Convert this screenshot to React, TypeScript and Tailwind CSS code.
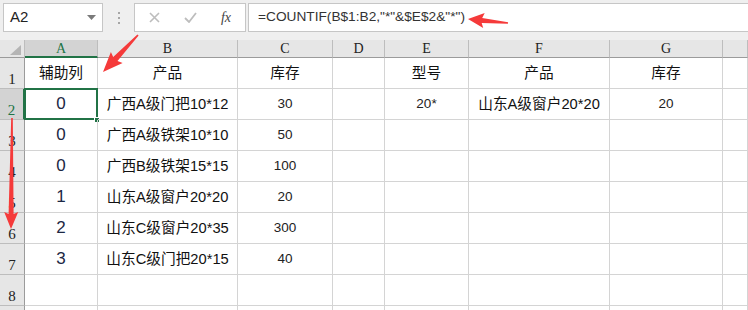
import React from 'react';

type Row = { n: number; label: string; cells: string[] };

const rows: Row[] = [
  { n: 1, label: '1', cells: ['辅助列', '产品', '库存', '', '型号', '产品', '库存', ''] },
  { n: 2, label: '2', cells: ['0', '广西A级门把10*12', '30', '', '20*', '山东A级窗户20*20', '20', ''] },
  { n: 3, label: '3', cells: ['0', '广西A级铁架10*10', '50', '', '', '', '', ''] },
  { n: 4, label: '4', cells: ['0', '广西B级铁架15*15', '100', '', '', '', '', ''] },
  { n: 5, label: '5', cells: ['1', '山东A级窗户20*20', '20', '', '', '', '', ''] },
  { n: 6, label: '6', cells: ['2', '山东C级窗户20*35', '300', '', '', '', '', ''] },
  { n: 7, label: '7', cells: ['3', '山东C级门把20*15', '40', '', '', '', '', ''] },
  { n: 8, label: '8', cells: ['', '', '', '', '', '', '', ''] },
  { n: 9, label: '', cells: ['', '', '', '', '', '', '', ''] },
];

const cols = ['A', 'B', 'C', 'D', 'E', 'F', 'G', ''];

// tapered annotation arrow, tip first then tail
function arrowPoints(tx: number, ty: number, sx: number, sy: number, headLen: number, headW: number, neckW: number, tailW: number) {
  const dx = tx - sx;
  const dy = ty - sy;
  const len = Math.hypot(dx, dy);
  const ux = dx / len;
  const uy = dy / len;
  const nx = -uy;
  const ny = ux;
  const bx = tx - ux * headLen;
  const by = ty - uy * headLen;
  const pts = [
    [tx, ty],
    [bx + nx * headW, by + ny * headW],
    [bx + nx * neckW + ux * 2, by + ny * neckW + uy * 2],
    [sx + nx * tailW, sy + ny * tailW],
    [sx - nx * tailW, sy - ny * tailW],
    [bx - nx * neckW + ux * 2, by - ny * neckW + uy * 2],
    [bx - nx * headW, by - ny * headW],
  ];
  return pts.map((p) => `${p[0].toFixed(1)},${p[1].toFixed(1)}`).join(' ');
}

const cellFont = { fontFamily: '"Liberation Sans", "Noto Sans CJK SC", sans-serif' };

export default function App() {
  return (
    <div className="relative w-[748px] h-[310px] overflow-hidden bg-white">
      {/* formula bar */}
      <div className="flex h-[40px] bg-[#efefef] pl-[3px] pt-[3px]">
        <div className="flex items-center justify-between w-[100px] h-[29px] bg-white border border-[#c6c6c6] pl-[6px] pr-[6px]">
          <span className="text-[15px] text-[#222]" style={cellFont}>A2</span>
          <svg width="9" height="5" viewBox="0 0 9 5"><path d="M0 0h9L4.5 5z" fill="#7a7a7a" /></svg>
        </div>
        <div className="w-[31px] h-[29px] flex flex-col items-center justify-center gap-[3px]">
          <span className="w-[2px] h-[2px] bg-[#a6a6a6]" />
          <span className="w-[2px] h-[2px] bg-[#a6a6a6]" />
          <span className="w-[2px] h-[2px] bg-[#a6a6a6]" />
        </div>
        <div className="flex items-center w-[112px] h-[29px] bg-white border border-[#c6c6c6]">
          <div className="w-[38px] flex justify-center">
            <svg width="11" height="11" viewBox="0 0 11 11"><path d="M1 1l9 9M10 1l-9 9" stroke="#bdbdbd" strokeWidth="1.6" /></svg>
          </div>
          <div className="w-[34px] flex justify-center">
            <svg width="13" height="11" viewBox="0 0 13 11"><path d="M1 6l4 4 7-9" stroke="#bdbdbd" strokeWidth="1.8" fill="none" /></svg>
          </div>
          <div className="w-[38px] flex justify-center">
            <span className="italic text-[14px] text-[#444]" style={{ fontFamily: '"Liberation Serif", serif' }}>fx</span>
          </div>
        </div>
        <div className="flex-1 ml-[2px] -mr-[2px] h-[29px] bg-white border border-[#c6c6c6] flex items-center pl-[9px]">
          <span className="text-[13.7px] text-[#333]" style={cellFont}>=COUNTIF(B$1:B2,"*"&amp;$E$2&amp;"*")</span>
        </div>
      </div>

      {/* sheet grid */}
      <div className="grid grid-cols-[25px_73px_140px_95px_52px_84px_141px_113px_1fr]">
        <div className="h-[18px] bg-[#e6e6e6] border-r border-b border-r-[#bdbdbd] border-b-[#9b9b9b] flex items-end justify-end pr-[3px] pb-[2px]">
          <svg width="11" height="10" viewBox="0 0 11 10"><path d="M11 0v10H0z" fill="#b5b5b5" /></svg>
        </div>
        {cols.map((c, i) => (
          <div
            key={'h' + i}
            className={
              i === 0
                ? 'h-[18px] bg-[#d3d3d3] border-r border-r-[#bdbdbd] border-b-2 border-b-[#217346] flex items-center justify-center text-[14px] text-[#217346]'
                : 'h-[18px] bg-[#e6e6e6] border-r border-r-[#bdbdbd] border-b border-b-[#9b9b9b] flex items-center justify-center text-[14px] text-[#222]'
            }
            style={{ fontFamily: '"Liberation Serif", serif' }}
          >
            {c}
          </div>
        ))}

        {rows.map((r) => (
          <React.Fragment key={r.n}>
            <div
              className={
                r.n === 2
                  ? 'h-[31px] bg-[#d3d3d3] border-r-2 border-r-[#217346] border-b border-b-[#bdbdbd] flex items-end justify-center text-[15px] leading-[17px] text-[#217346]'
                  : 'h-[31px] bg-[#e6e6e6] border-r border-r-[#9b9b9b] border-b border-b-[#bdbdbd] flex items-end justify-center text-[15px] leading-[17px] text-[#222]'
              }
              style={{ fontFamily: '"Liberation Serif", serif' }}
            >
              {r.label}
            </div>
            {r.cells.map((v, i) => {
              const isNum = i === 0 && r.n > 1;
              const small = (i === 2 || i === 6 || i === 4) && r.n > 1;
              return (
                <div
                  key={i}
                  className={
                    'relative h-[31px] border-r border-b border-[#d4d4d4] flex items-center justify-center whitespace-nowrap ' +
                    (isNum
                      ? 'text-[17px] text-[#1c2744]'
                      : small
                        ? 'text-[13.5px] text-[#222]'
                        : 'text-[14.7px] text-[#111]')
                  }
                  style={cellFont}
                >
                  {v}
                  {i === 0 && r.n === 2 && (
                    <>
                      <div className="absolute -left-[1px] -top-[1px] w-[74px] h-[32px] border-2 border-[#217346]" />
                      <div className="absolute left-[69px] top-[28px] w-[6px] h-[6px] bg-[#217346] border border-white" />
                    </>
                  )}
                </div>
              );
            })}
          </React.Fragment>
        ))}
      </div>

      {/* annotation arrows */}
      <svg className="absolute inset-0 pointer-events-none" width="748" height="310">
        <polygon points={arrowPoints(468, 19, 508, 23, 16, 7.5, 2.5, 0.8)} fill="#f53a3a" />
        <polygon points={arrowPoints(103, 72, 138, 35, 20, 8, 3, 0.8)} fill="#f53a3a" />
        <polygon points={arrowPoints(11, 229, 12, 118, 17, 7, 2.5, 0.8)} fill="#f53a3a" />
      </svg>
    </div>
  );
}
